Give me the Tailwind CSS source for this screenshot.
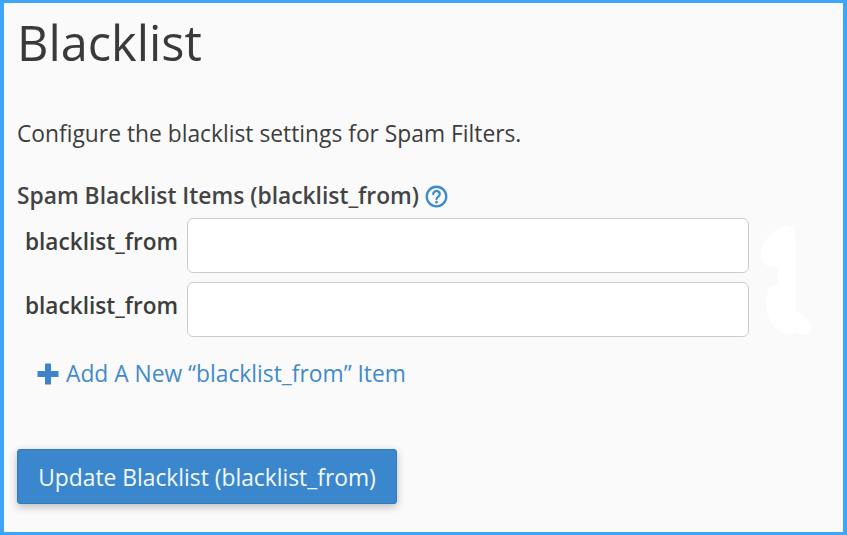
<!DOCTYPE html>
<html lang="en">
<head>
    <meta charset="UTF-8">
    <title>Blacklist</title>
    <script src="https://cdn.jsdelivr.net/npm/@tailwindcss/browser@4"></script>
</head>
<body class="bg-[#fafafa]">
    <div class="relative w-[847px] h-[535px] overflow-hidden border-t-[3px] border-l-[4px] border-r-[4px] border-b-[3px] border-[#3fa5fb] bg-[#fafafa] font-['Open_Sans',sans-serif] text-[#333]">
        <h1 class="pl-[13px] pt-[12px] text-[48.7px] leading-[54px] text-[#3a3a3a]">Blacklist</h1>

        <p class="pl-[13px] mt-[50px] text-[22.8px] leading-[30px] text-[#3d3d3d]">Configure the blacklist settings for Spam Filters.</p>

        <div class="flex items-center gap-[6px] pl-[13px] mt-[32px] text-[22.8px] leading-[30px] font-semibold text-[#444]">
            <span>Spam Blacklist Items (blacklist_from)</span>
            <svg class="w-[23px] h-[23px]" viewBox="0 0 24 24" fill="none" stroke="#3d8bca" stroke-width="2.4" stroke-linecap="round">
                <circle cx="12" cy="12" r="10.2"/>
                <path d="M8.6 9.4a3.4 3.2 0 1 1 5.3 2.7c-1.2.8-1.9 1.4-1.9 2.6"/>
                <path d="M12 17.8v.1" stroke-width="2.8"/>
            </svg>
        </div>

        <div class="flex flex-col gap-[9px] mt-[7px] pl-[21px]">
            <div class="flex items-start">
                <label class="w-[162px] pt-[9px] text-[22.6px] leading-[30px] font-semibold text-[#3d3d3d]">blacklist_from</label>
                <input type="text" class="w-[562px] h-[55px] bg-white border border-[#cccccc] rounded-[6px]">
            </div>
            <div class="flex items-start">
                <label class="w-[162px] pt-[9px] text-[22.6px] leading-[30px] font-semibold text-[#3d3d3d]">blacklist_from</label>
                <input type="text" class="w-[562px] h-[55px] bg-white border border-[#cccccc] rounded-[6px]">
            </div>
        </div>

        <a class="flex items-center gap-[7px] pl-[33px] mt-[22px] text-[22.8px] leading-[30px] text-[#428bca]">
            <svg class="w-[22px] h-[22px]" viewBox="0 0 22 22" fill="#3d85c6">
                <path d="M8 0.5h6v7.5h7.5v6H14v7.5H8V14H0.5V8H8z"/>
            </svg>
            <span>Add A New “blacklist_from” Item</span>
        </a>

        <button class="block ml-[13px] mt-[60px] pt-[3px] w-[380px] h-[55px] bg-[#3b87cd] border border-[#3579b8] rounded-[3px] text-[22.8px] text-[#f4f9fd] shadow-[0_3px_8px_rgba(0,0,0,0.25)]">Update Blacklist (blacklist_from)</button>

        <!-- erased patch right of the inputs -->
        <svg class="absolute left-[756px] top-[222px]" width="54" height="112" viewBox="0 0 54 112" fill="#ffffff">
            <path d="M24 1c7-1 12 5 12 14l0 45 0 25 11 9c5 5 6 11 2 14-4 3-9 2-12-1-4 3-10 3-16 0-8-5-13-13-14-21-1-8-1-14 1-20 2-5 6-7 10-7V43c-4 0-9-1-13-4-4-4-5-11-3-17 2-6 6-10 10-13 3-3 6-7 12-8z"/>
        </svg>
    </div>
</body>
</html>
